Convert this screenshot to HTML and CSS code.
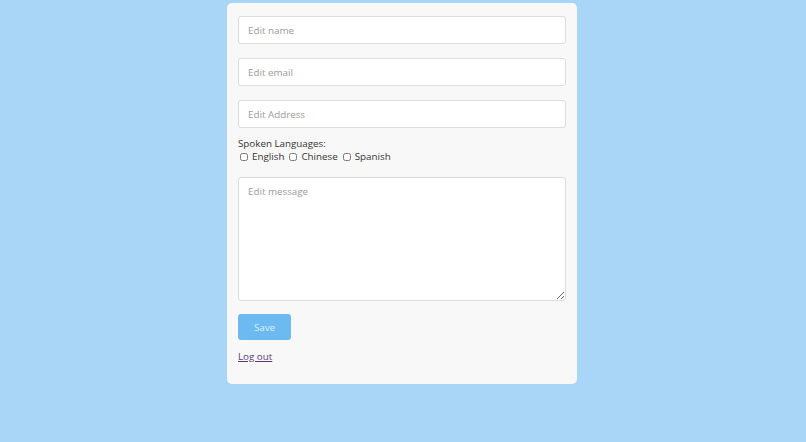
FILE: index.html
```html
<!DOCTYPE html>
<html>
<head>
<meta charset="utf-8">
<link rel="stylesheet" href="styles.css">
</head>
<body>
<div class="card">
  <form class="form">
    <input class="field" type="text" placeholder="Edit name">
    <input class="field" type="text" placeholder="Edit email">
    <input class="field" type="text" placeholder="Edit Address">
    <div class="langs">
      <div class="langs-title">Spoken Languages:</div>
      <div class="langs-row">
        <label class="lang"><input type="checkbox" class="cb">English</label>
        <label class="lang"><input type="checkbox" class="cb">Chinese</label>
        <label class="lang"><input type="checkbox" class="cb">Spanish</label>
      </div>
    </div>
    <textarea class="area" placeholder="Edit message"></textarea>
    <div class="actions"><button type="button" class="save">Save</button></div>
  </form>
  <div class="logout-row"><a class="logout" href="#">Log out</a></div>
</div>
</body>
</html>
```
FILE: styles.css
```css
html, body {
  margin: 0;
  padding: 0;
  background: #a9d6f6;
  height: 100%;
}
body {
  font-family: "Open Sans", "DejaVu Sans", sans-serif;
  font-size: 9.8px;
  color: #333;
  padding: 3px 2px 0 0;
  box-sizing: border-box;
}
.card {
  width: 350px;
  margin: 0 auto;
  background: #f8f8f8;
  border-radius: 5px;
  padding: 13px 11px 21px 11px;
  box-sizing: border-box;
}
.form {
  display: flex;
  flex-direction: column;
  margin: 0;
}
.field {
  height: 28px;
  border: 1px solid #dcdcdc;
  border-radius: 3px;
  background: #fff;
  padding: 0 9px;
  font-family: inherit;
  font-size: 9.8px;
  margin-bottom: 14px;
  box-sizing: border-box;
  outline: none;
}
.field::placeholder, .area::placeholder {
  color: #9a9a9a;
}
.langs {
  margin-top: -5px;
  margin-bottom: 13px;
}
.langs-title {
  line-height: 13px;
}
.langs-row {
  display: flex;
  align-items: center;
  line-height: 14px;
}
.lang {
  display: flex;
  align-items: center;
  margin-right: 5px;
}
.cb {
  width: 8px;
  height: 8px;
  margin: 0 4px 0 2px;
}
.lang + .lang .cb {
  margin-left: 0;
}
.area {
  height: 124px;
  border: 1px solid #dcdcdc;
  border-radius: 3px;
  background: #fff;
  padding: 7px 9px;
  font-family: inherit;
  font-size: 9.8px;
  box-sizing: border-box;
  resize: vertical;
  outline: none;
  margin-bottom: 13px;
}
.actions {
  display: flex;
}
.save {
  width: 53px;
  height: 26px;
  background: #6dbaf1;
  color: #dbeefc;
  border: none;
  border-radius: 3px;
  font-family: inherit;
  font-size: 9.8px;
  padding: 0;
}
.logout-row {
  margin-top: 11px;
  line-height: 12px;
}
.logout {
  color: #5b3a7a;
  font-size: 9.8px;
}
```
